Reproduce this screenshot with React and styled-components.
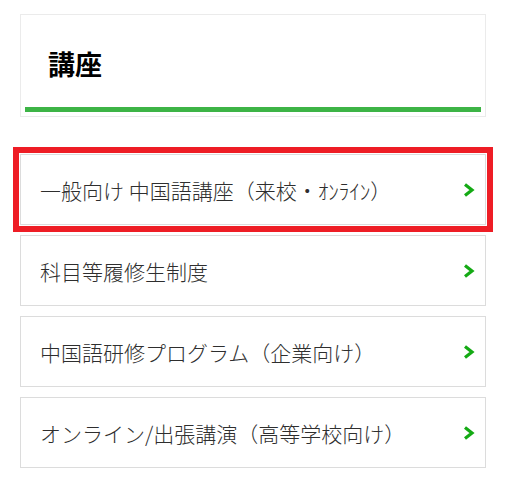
import styled, { createGlobalStyle } from 'styled-components';

const GlobalStyle = createGlobalStyle`
  body {
    margin: 0;
    background: #fff;
    font-family: "Noto Sans CJK JP", "Noto Sans", sans-serif;
  }
`;

const Page = styled.div`
  width: 466px;
  padding: 14px 0 0 20px;
`;

const Header = styled.div`
  border: 1px solid #ebebeb;
  padding: 4px;
`;

const Title = styled.h2`
  margin: 0;
  height: 88px;
  display: flex;
  align-items: center;
  padding-left: 23px;
  font-size: 27px;
  font-weight: 700;
  color: #000;
  border-bottom: 5px solid #3db446;
`;

const List = styled.ul`
  list-style: none;
  margin: 37px 0 0;
  padding: 0;
  display: flex;
  flex-direction: column;
  gap: 10px;
`;

const Item = styled.li`
  height: 71px;
  box-sizing: border-box;
  border: 1px solid #dcdcdc;
  display: flex;
  align-items: center;
  justify-content: space-between;
  padding: 0 10px 0 19px;
  font-size: 21px;
  font-weight: 300;
  color: #2e2e2e;
  outline: ${p => (p.$active ? '6px solid #ee1d25' : 'none')};
  outline-offset: 1px;
`;

const Chevron = () => (
  <svg width="12" height="14" viewBox="0 0 12 14">
    <path d="M2 1.5 L9 7 L2 12.5" fill="none" stroke="#14aa14" strokeWidth="3.2" />
  </svg>
);

const items = [
  '一般向け 中国語講座（来校・ｵﾝﾗｲﾝ）',
  '科目等履修生制度',
  '中国語研修プログラム（企業向け）',
  'オンライン/出張講演（高等学校向け）',
];

export default function App() {
  return (
    <Page>
      <GlobalStyle />
      <Header>
        <Title>講座</Title>
      </Header>
      <List>
        {items.map((label, i) => (
          <Item key={label} $active={i === 0}>
            <span>{label}</span>
            <Chevron />
          </Item>
        ))}
      </List>
    </Page>
  );
}
